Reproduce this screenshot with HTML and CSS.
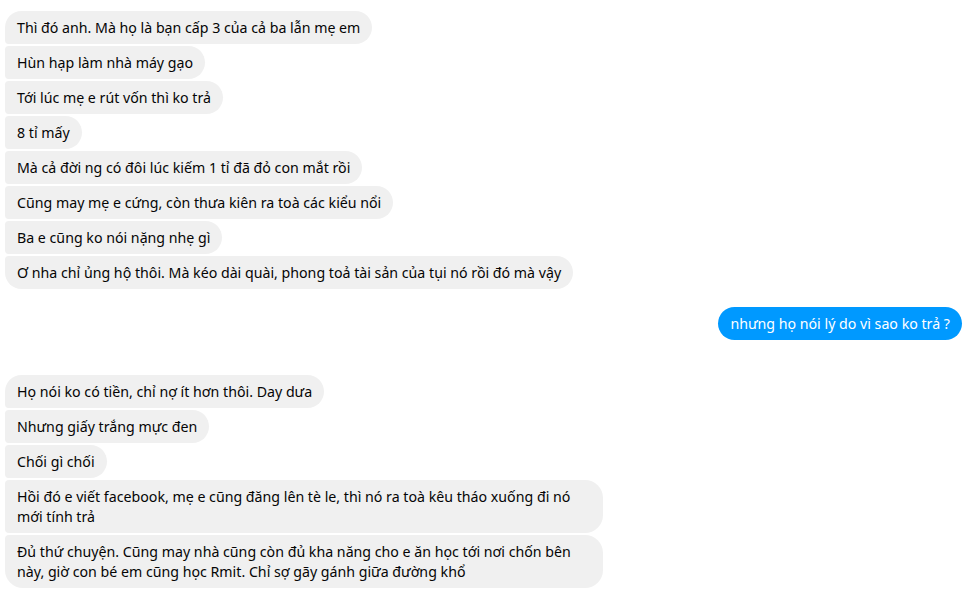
FILE: index.html
```html
<!DOCTYPE html>
<html lang="vi"><head><meta charset="utf-8"><link rel="stylesheet" href="styles.css"></head>
<body>
<div class="chat">
  <div class="group in g1">
    <div class="msg">Thì đó anh. Mà họ là bạn cấp 3 của cả ba lẫn mẹ em</div>
    <div class="msg">Hùn hạp làm nhà máy gạo</div>
    <div class="msg">Tới lúc mẹ e rút vốn thì ko trả</div>
    <div class="msg">8 tỉ mấy</div>
    <div class="msg">Mà cả đời ng có đôi lúc kiếm 1 tỉ đã đỏ con mắt rồi</div>
    <div class="msg">Cũng may mẹ e cứng, còn thưa kiên ra toà các kiểu nổi</div>
    <div class="msg">Ba e cũng ko nói nặng nhẹ gì</div>
    <div class="msg">Ơ nha chỉ ủng hộ thôi. Mà kéo dài quài, phong toả tài sản của tụi nó rồi đó mà vậy</div>
  </div>
  <div class="group out g2">
    <div class="msg">nhưng họ nói lý do vì sao ko trả ?</div>
  </div>
  <div class="group in g3">
    <div class="msg">Họ nói ko có tiền, chỉ nợ ít hơn thôi. Day dưa</div>
    <div class="msg">Nhưng giấy trắng mực đen</div>
    <div class="msg">Chối gì chối</div>
    <div class="msg wide">Hồi đó e viết facebook, mẹ e cũng đăng lên tè le, thì nó ra toà kêu tháo xuống đi nó<br>mới tính trả</div>
    <div class="msg wide">Đủ thứ chuyện. Cũng may nhà cũng còn đủ kha năng cho e ăn học tới nơi chốn bên<br>này, giờ con bé em cũng học Rmit. Chỉ sợ gãy gánh giữa đường khổ</div>
  </div>
</div>
</body></html>
```
FILE: styles.css
```css
html, body {
  margin: 0;
  background: #ffffff;
}
.chat {
  width: 969px;
  height: 592px;
  overflow: hidden;
  padding-top: 11px;
  box-sizing: border-box;
  font-family: "Noto Sans", "Open Sans", sans-serif;
  font-size: 14.2px;
}
.group {
  display: flex;
  flex-direction: column;
  gap: 2px;
}
.group.in {
  align-items: flex-start;
  padding-left: 5px;
}
.group.out {
  align-items: flex-end;
  padding-right: 7px;
}
.g2 { margin-top: 18px; }
.g3 { margin-top: 35px; }
.msg {
  padding: 6.5px 12px;
  line-height: 20px;
  white-space: nowrap;
  background: #f0f0f0;
  color: #050505;
  border-radius: 4px 18px 18px 4px;
}
.in .msg:first-child { border-top-left-radius: 18px; }
.in .msg:last-child { border-bottom-left-radius: 18px; }
.out .msg {
  background: #0099ff;
  color: #ffffff;
  border-radius: 18px;
}
.msg.wide {
  width: 574px;
}
```
